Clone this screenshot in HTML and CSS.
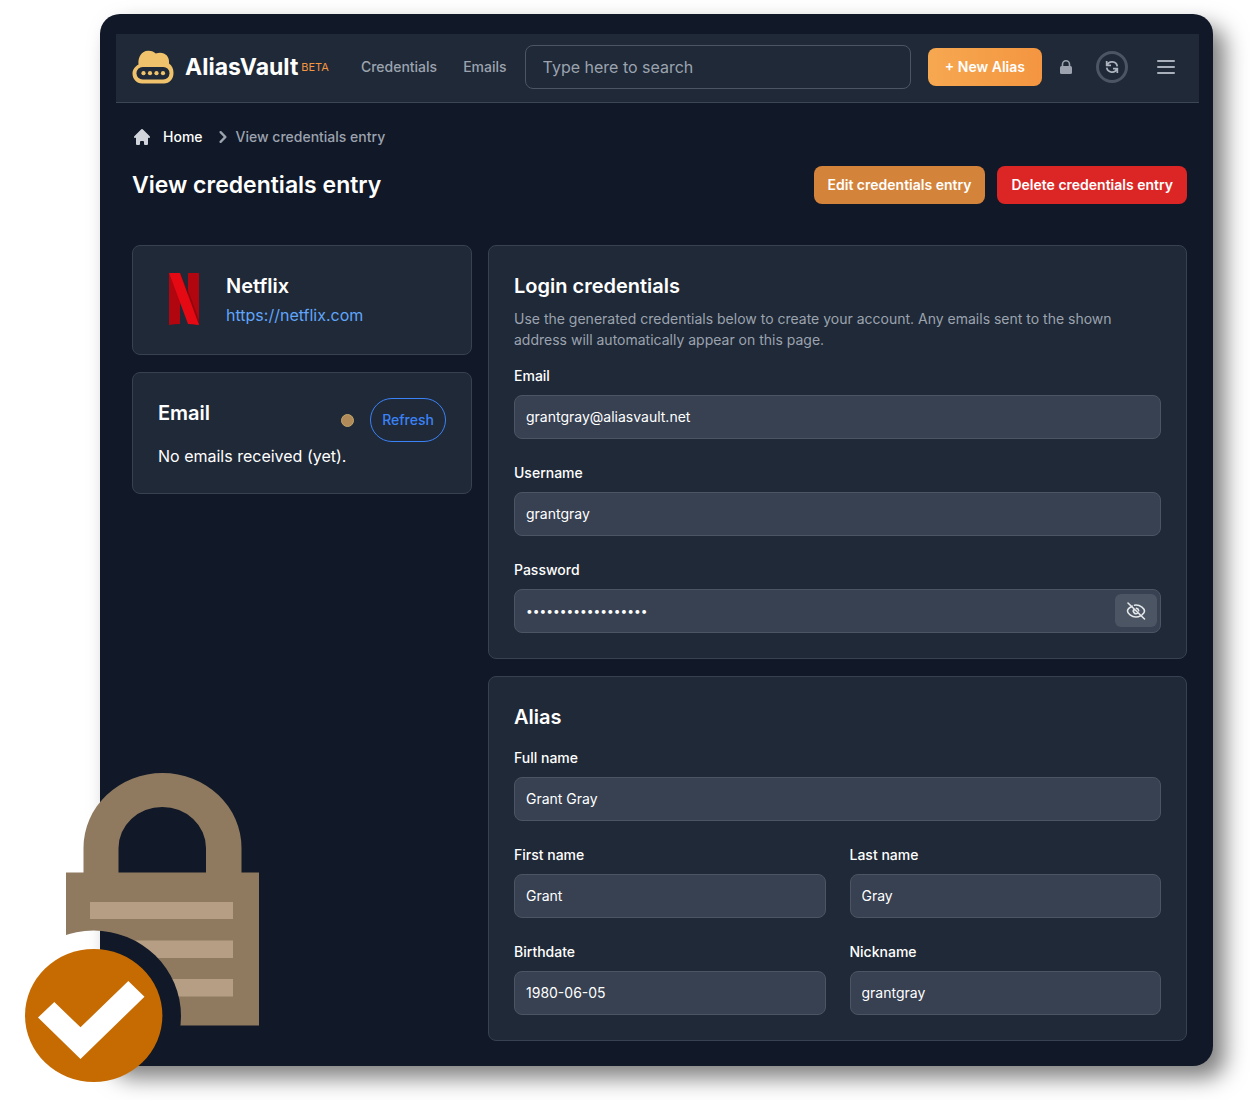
FILE: index.html
```html
<!DOCTYPE html>
<html lang="en">
<head>
<meta charset="utf-8">
<meta name="viewport" content="width=device-width, initial-scale=1">
<title>AliasVault - View credentials entry</title>
<link rel="stylesheet" href="styles.css">
</head>
<body>
<div class="window">
  <header class="navbar">
    <a class="brand" href="#">
      <svg class="brand-logo" viewBox="0 0 42 34" aria-hidden="true">
        <path fill="#f0c26c" d="M6.500 14.500C5.800 7 9.500 1 16 .7c3.500-.2 6 1 7.800 2.800C31 .8 38 5 37 13.500c3 2 4.500 5.500 4.500 9.500C41.500 29 37.500 33.500 32 33.500H10C4.500 33.500.5 29 .5 23.500c0-4 2.500-7 6-9z"/>
        <rect x="4.500" y="17" width="33" height="12.500" rx="6.200" fill="#1f2937"/>
        <g fill="#f0c26c"><circle cx="11.500" cy="23.200" r="2.100"/><circle cx="18" cy="23.200" r="2.100"/><circle cx="24.500" cy="23.200" r="2.100"/><circle cx="31" cy="23.200" r="2.100"/></g>
      </svg>
      <span class="brand-name">AliasVault</span>
      <span class="brand-tag">BETA</span>
    </a>
    <nav class="nav-links">
      <a href="#">Credentials</a>
      <a href="#">Emails</a>
    </nav>
    <input class="search" type="search" placeholder="Type here to search" aria-label="Search">
    <button class="btn btn-new" type="button">+ New Alias</button>
    <button class="icon-btn lock-btn" type="button" aria-label="Lock vault">
      <svg width="12" height="14" viewBox="0 0 12 14" aria-hidden="true"><path d="M2.500 6.500V4.300a3.500 3.500 0 0 1 7 0v2.200" fill="none" stroke="#9ca3af" stroke-width="1.600"/><rect y="6" width="12" height="8" rx="1.500" fill="#9ca3af"/></svg>
    </button>
    <button class="icon-btn sync-btn" type="button" aria-label="Sync">
      <svg width="16" height="16" viewBox="0 0 24 24" fill="none" stroke="#adb4bf" stroke-width="2.600" aria-hidden="true"><path d="M4 3v6.500h.582m15.356 1.500A8.001 8.001 0 0 0 4.582 9.500m0 0H10.500m9.500 11.500v-6.500h-.581m0 0a8.003 8.003 0 0 1-15.357-1.500m15.357 1.500H13.500"/></svg>
    </button>
    <button class="icon-btn menu-btn" type="button" aria-label="Menu">
      <svg width="18" height="16" viewBox="0 0 18 16" stroke="#a9b0bb" stroke-width="2" stroke-linecap="round" aria-hidden="true"><path d="M1 2h16M1 8h16M1 14h16"/></svg>
    </button>
  </header>

  <main class="content">
    <nav class="breadcrumb" aria-label="Breadcrumb">
      <a class="crumb-home" href="#">
        <svg width="20" height="20" viewBox="0 0 20 20" fill="#d1d5db" aria-hidden="true"><path d="M10.707 2.293a1 1 0 0 0-1.414 0l-7 7a1 1 0 0 0 1.414 1.414L4 10.414V17a1 1 0 0 0 1 1h2a1 1 0 0 0 1-1v-2a1 1 0 0 1 1-1h2a1 1 0 0 1 1 1v2a1 1 0 0 0 1 1h2a1 1 0 0 0 1-1v-6.586l.293.293a1 1 0 0 0 1.414-1.414l-7-7z"/></svg>
        Home
      </a>
      <svg class="crumb-sep" width="24" height="24" viewBox="0 0 20 20" fill="#9ca3af" aria-hidden="true"><path d="M7.293 14.707a1 1 0 0 1 0-1.414L10.586 10 7.293 6.707a1 1 0 0 1 1.414-1.414l4 4a1 1 0 0 1 0 1.414l-4 4a1 1 0 0 1-1.414 0z"/></svg>
      <span class="crumb-current">View credentials entry</span>
    </nav>

    <div class="page-head">
      <h1>View credentials entry</h1>
      <div class="page-actions">
        <button class="btn btn-edit" type="button">Edit credentials entry</button>
        <button class="btn btn-delete" type="button">Delete credentials entry</button>
      </div>
    </div>

    <div class="columns">
      <div class="column">
        <section class="card service">
          <svg class="service-logo" viewBox="0 0 54 54" aria-hidden="true">
            <path fill="#b1060f" d="M11 1h11v51q-6 .2-11 1zM30 1h11v52q-5-.8-11-1z"/>
            <path fill="#7c050b" opacity=".6" d="M11 1l11 30v-8L30 45V26L41 53V48L30 18 22 1z"/>
            <path fill="#e50914" d="M11 1h11l19 52q-6-1-11-1z"/>
          </svg>
          <div>
            <h2>Netflix</h2>
            <a class="service-link" href="#">https://netflix.com</a>
          </div>
        </section>
        <section class="card">
          <div class="mail-head">
            <h2>Email</h2>
            <div class="mail-tools">
              <span class="status-dot"></span>
              <button class="refresh" type="button">Refresh</button>
            </div>
          </div>
          <p class="mail-empty">No emails received (yet).</p>
        </section>
      </div>

      <div class="column">
        <section class="card form">
          <div class="intro">
            <h2>Login credentials</h2>
            <p>Use the generated credentials below to create your account. Any emails sent to the shown address will automatically appear on this page.</p>
          </div>
          <div class="fields">
            <div class="field wide"><label for="email">Email</label><input id="email" type="text" value="grantgray@aliasvault.net"></div>
            <div class="field wide"><label for="username">Username</label><input id="username" type="text" value="grantgray"></div>
            <div class="field wide">
              <label for="password">Password</label>
              <div class="password">
                <input id="password" type="password" value="Xk29vLq7TzPw41sRbM">
                <button class="reveal" type="button" aria-label="Show password">
                  <svg width="20" height="20" viewBox="0 0 20 20" fill="none" stroke="#e5e7eb" stroke-width="1.600" stroke-linecap="round" stroke-linejoin="round" aria-hidden="true"><path d="M6.200 5.200C3.500 6.400 1.500 8.600 1.500 10c0 2.500 4 6 8.500 6 1.700 0 3.200-.4 4.500-1.100M8.500 4.200C9 4.100 9.500 4 10 4c4.500 0 8.500 3.500 8.500 6 0 1.200-.9 2.600-2.300 3.700M8 8.200a2.700 2.700 0 0 0 3.800 3.800M10.500 7.400a2.700 2.700 0 0 1 2.200 2.400M2 2l16.500 16"/></svg>
                </button>
              </div>
            </div>
          </div>
        </section>

        <section class="card form">
          <h2>Alias</h2>
          <div class="fields">
            <div class="field wide"><label for="fullname">Full name</label><input id="fullname" type="text" value="Grant Gray"></div>
            <div class="field"><label for="firstname">First name</label><input id="firstname" type="text" value="Grant"></div>
            <div class="field"><label for="lastname">Last name</label><input id="lastname" type="text" value="Gray"></div>
            <div class="field"><label for="birthdate">Birthdate</label><input id="birthdate" type="text" value="1980-06-05"></div>
            <div class="field"><label for="nickname">Nickname</label><input id="nickname" type="text" value="grantgray"></div>
          </div>
        </section>
      </div>
    </div>
  </main>

  <svg class="badge" width="236" height="310" viewBox="24 773 236 310" aria-hidden="true">
    <mask id="ring">
      <rect x="24" y="773" width="236" height="310" fill="#fff"/>
      <ellipse cx="93.500" cy="1016" rx="87.500" ry="85.500" fill="#000"/>
    </mask>
    <g mask="url(#ring)">
      <path fill="#8f7a60" fill-rule="evenodd" d="M66 872.500H83.500V848A79 75 0 0 1 241.500 848V872.500H259V1025.500H66zM118.500 872.500H206V848A43.750 41 0 0 0 118.500 848z"/>
      <path fill="#b59e84" d="M90 902h143v17H90zM90 940.500h143v17.500H90zM90 979h143v17.500H90z"/>
    </g>
    <ellipse cx="93.700" cy="1015.500" rx="68.700" ry="66.500" fill="#c66b02"/>
    <path fill="#fff" d="M38 1017.500L54.300 1002 80.500 1027.300 128.300 981 144.500 996.700 80.500 1059z"/>
  </svg>
</div>
</body>
</html>
```
FILE: styles.css
```css
* {
  box-sizing: border-box;
}

body {
  margin: 0;
  background: #fff;
  color: #fff;
  font-family: Inter, "Liberation Sans", sans-serif;
  font-size: 14px;
  line-height: 20px;
}

h1,
h2,
p {
  margin: 0;
}

a {
  color: inherit;
  text-decoration: none;
}

button,
input {
  font: inherit;
  color: inherit;
}

button {
  border: 0;
  padding: 0;
  background: none;
  cursor: pointer;
}

svg {
  display: block;
  flex: none;
}

.window {
  position: relative;
  margin: 14px 37px 34px 100px;
  padding: 20px 14px 25px 16px;
  border-radius: 20px;
  background: #111827;
  box-shadow: 12px 12px 22px rgba(0, 0, 0, 0.5);
}

/* Top bar */

.navbar {
  display: flex;
  align-items: center;
  height: 69px;
  padding: 0 24px 2px 16px;
  border-bottom: 1px solid #3b4757;
  background: #1f2937;
}

.brand {
  display: flex;
  align-items: center;
}

.brand-logo {
  width: 42px;
  height: 34px;
  margin-right: 11px;
}

.brand-name {
  font-size: 23px;
  font-weight: 700;
}

.brand-tag {
  margin-left: 3px;
  color: #f49541;
  font-size: 11px;
}

.nav-links {
  display: flex;
  gap: 26px;
  margin: 0 18px 0 32px;
  color: #9ca3af;
  font-weight: 500;
}

.search {
  flex: 1;
  min-width: 0;
  height: 44px;
  padding: 0 17px;
  border: 1px solid #4b5563;
  border-radius: 8px;
  background: transparent;
  font-size: 16px;
}

.search::placeholder {
  color: #9ca3af;
}

.btn {
  height: 38px;
  padding: 0 14px;
  border-radius: 8px;
  font-weight: 600;
  white-space: nowrap;
}

.btn-new {
  margin-left: 17px;
  padding: 0 17px;
  background: linear-gradient(90deg, #f6a850, #f49541);
}

.lock-btn {
  margin: 0 24px 0 18px;
}

.sync-btn {
  display: flex;
  align-items: center;
  justify-content: center;
  width: 32px;
  height: 32px;
  border: 3px solid #4b5563;
  border-radius: 50%;
}

.menu-btn {
  margin-left: 29px;
}

/* Page */

.content {
  padding: 22px 12px 0 16px;
}

.breadcrumb {
  display: flex;
  align-items: center;
  font-weight: 500;
}

.crumb-home {
  display: flex;
  align-items: center;
  gap: 11px;
}

.crumb-sep {
  margin: 0 1px 0 8px;
}

.crumb-current {
  color: #9ca3af;
}

.page-head {
  display: flex;
  align-items: center;
  justify-content: space-between;
  margin: 17px 0 41px;
}

h1 {
  font-size: 23px;
  font-weight: 600;
  line-height: 32px;
}

h2 {
  font-size: 20px;
  font-weight: 600;
  line-height: 30px;
}

.page-actions {
  display: flex;
  gap: 12px;
}

.btn-edit {
  background: #d4833a;
}

.btn-delete {
  background: #dc2626;
}

.columns {
  display: grid;
  grid-template-columns: minmax(0, 340fr) minmax(0, 699fr);
  gap: 16px;
}

.column {
  display: flex;
  flex-direction: column;
  gap: 17px;
}

.card {
  padding: 25px;
  border: 1px solid #374151;
  border-radius: 8px;
  background: #1f2937;
}

.service {
  display: flex;
  gap: 14px;
}

.service-logo {
  width: 54px;
  height: 54px;
  margin-top: 1px;
}

.service-link {
  display: block;
  color: #60a5fa;
  font-size: 16px;
  line-height: 28px;
}

.mail-head {
  display: flex;
  justify-content: space-between;
}

.mail-tools {
  display: flex;
  align-items: center;
  gap: 16px;
}

.status-dot {
  width: 13px;
  height: 13px;
  border: 1px solid #c4a86a;
  border-radius: 50%;
  background: #b08a58;
}

.refresh {
  width: 76px;
  height: 44px;
  border: 1px solid #3b82f6;
  border-radius: 22px;
  color: #3b82f6;
  font-weight: 500;
}

.mail-empty {
  margin-top: 2px;
  font-size: 16px;
  line-height: 24px;
}

/* Forms */

.form {
  display: flex;
  flex-direction: column;
  gap: 16px;
}

.intro p {
  margin-top: 7px;
  color: #9ca3af;
  line-height: 21px;
}

.fields {
  display: grid;
  grid-template-columns: 1fr 1fr;
  gap: 24px;
}

.field {
  display: flex;
  flex-direction: column;
  gap: 9px;
  min-width: 0;
}

.wide {
  grid-column: 1 / -1;
}

.field label {
  font-weight: 500;
}

.field input {
  width: 100%;
  height: 44px;
  padding: 0 11px 2px;
  border: 1px solid #4b5563;
  border-radius: 8px;
  background: #374151;
}

.password {
  position: relative;
}

.password input {
  display: block;
  font-size: 12px;
}

.reveal {
  position: absolute;
  top: 5px;
  right: 4px;
  display: flex;
  align-items: center;
  justify-content: center;
  width: 42px;
  height: 33px;
  border-radius: 6px;
  background: #4b5563;
}

/* Padlock overlapping the window's lower left corner */

.badge {
  position: absolute;
  left: -76px;
  bottom: -17px;
}
```
